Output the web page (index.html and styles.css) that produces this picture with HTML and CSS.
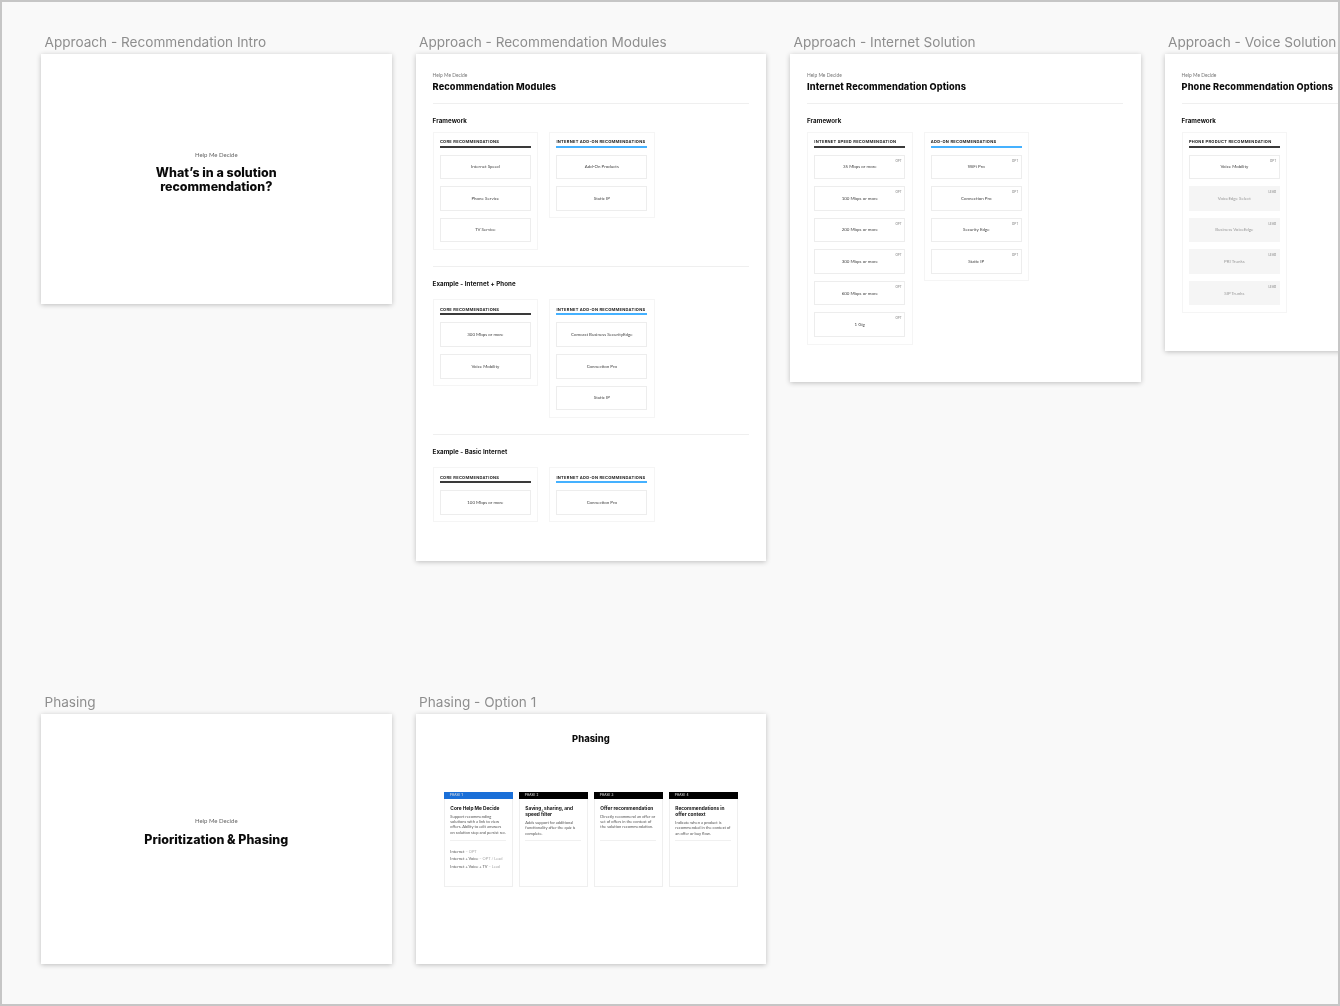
FILE: index.html
```html
<!DOCTYPE html>
<html lang="en">
<head>
<meta charset="utf-8">
<title>Help Me Decide</title>
<link rel="stylesheet" href="styles.css">
</head>
<body>
<main class="canvas">

<section class="frame-wrap at-intro">
  <h2 class="frame-label">Approach - Recommendation Intro</h2>
  <div class="frame frame-center intro-h">
    <p class="eyebrow-lg">Help Me Decide</p>
    <h1 class="hero">What’s in a solution<br>recommendation?</h1>
  </div>
</section>

<section class="frame-wrap at-modules">
  <h2 class="frame-label">Approach - Recommendation Modules</h2>
  <div class="frame frame-doc modules-h">
    <p class="eyebrow">Help Me Decide</p>
    <h1 class="doc-title">Recommendation Modules</h1>
    <hr class="rule">
    <h3 class="sub">Framework</h3>
    <div class="module-row">
      <div class="module">
        <h4 class="mod-head">CORE RECOMMENDATIONS</h4>
        <div class="item">Internet Speed</div>
        <div class="item">Phone Service</div>
        <div class="item">TV Service</div>
      </div>
      <div class="module">
        <h4 class="mod-head blue">INTERNET ADD-ON RECOMMENDATIONS</h4>
        <div class="item">Add-On Products</div>
        <div class="item">Static IP</div>
      </div>
    </div>
    <hr class="rule rule-mid">
    <h3 class="sub">Example - Internet + Phone</h3>
    <div class="module-row row-example">
      <div class="module">
        <h4 class="mod-head">CORE RECOMMENDATIONS</h4>
        <div class="item">300 Mbps or more</div>
        <div class="item">Voice Mobility</div>
      </div>
      <div class="module">
        <h4 class="mod-head blue">INTERNET ADD-ON RECOMMENDATIONS</h4>
        <div class="item">Comcast Business SecurityEdge</div>
        <div class="item">Connection Pro</div>
        <div class="item">Static IP</div>
      </div>
    </div>
    <hr class="rule rule-mid">
    <h3 class="sub">Example - Basic Internet</h3>
    <div class="module-row row-example">
      <div class="module">
        <h4 class="mod-head">CORE RECOMMENDATIONS</h4>
        <div class="item">100 Mbps or more</div>
      </div>
      <div class="module">
        <h4 class="mod-head blue">INTERNET ADD-ON RECOMMENDATIONS</h4>
        <div class="item">Connection Pro</div>
      </div>
    </div>
  </div>
</section>

<section class="frame-wrap at-internet">
  <h2 class="frame-label">Approach - Internet Solution</h2>
  <div class="frame frame-doc internet-h">
    <p class="eyebrow">Help Me Decide</p>
    <h1 class="doc-title">Internet Recommendation Options</h1>
    <hr class="rule">
    <h3 class="sub">Framework</h3>
    <div class="module-row">
      <div class="module">
        <h4 class="mod-head">INTERNET SPEED RECOMMENDATION</h4>
        <div class="item"><span class="tag">OPT</span>35 Mbps or more</div>
        <div class="item"><span class="tag">OPT</span>100 Mbps or more</div>
        <div class="item"><span class="tag">OPT</span>200 Mbps or more</div>
        <div class="item"><span class="tag">OPT</span>300 Mbps or more</div>
        <div class="item"><span class="tag">OPT</span>600 Mbps or more</div>
        <div class="item"><span class="tag">OPT</span>1 Gig</div>
      </div>
      <div class="module">
        <h4 class="mod-head blue">ADD-ON RECOMMENDATIONS</h4>
        <div class="item"><span class="tag">OPT</span>WiFi Pro</div>
        <div class="item"><span class="tag">OPT</span>Connection Pro</div>
        <div class="item"><span class="tag">OPT</span>Security Edge</div>
        <div class="item"><span class="tag">OPT</span>Static IP</div>
      </div>
    </div>
  </div>
</section>

<section class="frame-wrap at-voice">
  <h2 class="frame-label">Approach - Voice Solution</h2>
  <div class="frame frame-doc voice-h">
    <p class="eyebrow">Help Me Decide</p>
    <h1 class="doc-title">Phone Recommendation Options</h1>
    <hr class="rule">
    <h3 class="sub">Framework</h3>
    <div class="module-row">
      <div class="module">
        <h4 class="mod-head">PHONE PRODUCT RECOMMENDATION</h4>
        <div class="item"><span class="tag">OPT</span>Voice Mobility</div>
        <div class="item lead"><span class="tag">LEAD</span>VoiceEdge Select</div>
        <div class="item lead"><span class="tag">LEAD</span>Business VoiceEdge</div>
        <div class="item lead"><span class="tag">LEAD</span>PRI Trunks</div>
        <div class="item lead"><span class="tag">LEAD</span>SIP Trunks</div>
      </div>
    </div>
  </div>
</section>

<section class="frame-wrap at-phasing">
  <h2 class="frame-label">Phasing</h2>
  <div class="frame frame-center intro-h phasing-h">
    <p class="eyebrow-lg">Help Me Decide</p>
    <h1 class="hero">Prioritization &amp; Phasing</h1>
  </div>
</section>

<section class="frame-wrap at-option">
  <h2 class="frame-label">Phasing - Option 1</h2>
  <div class="frame phase-frame intro-h phasing-h">
    <h1 class="phase-title">Phasing</h1>
    <div class="phase-row">
      <article class="phase">
        <div class="phase-bar bar-blue">PHASE 1</div>
        <div class="phase-copy">
          <h5 class="phase-name">Core Help Me Decide</h5>
          <p class="phase-text">Support recommending<br>solutions with a link to view<br>offers. Ability to edit answers<br>on solution step and persist rec.</p>
        </div>
        <ul class="phase-list">
          <li>Internet <span class="dim">– OPT</span></li>
          <li>Internet + Voice <span class="dim">– OPT / Lead</span></li>
          <li>Internet + Voice + TV <span class="dim">– Lead</span></li>
        </ul>
      </article>
      <article class="phase">
        <div class="phase-bar">PHASE 2</div>
        <div class="phase-copy">
          <h5 class="phase-name">Saving, sharing, and<br>speed filter</h5>
          <p class="phase-text">Adds support for additional<br>functionality after the quiz is<br>complete.</p>
        </div>
      </article>
      <article class="phase">
        <div class="phase-bar">PHASE 3</div>
        <div class="phase-copy">
          <h5 class="phase-name">Offer recommendation</h5>
          <p class="phase-text">Directly recommend an offer or<br>set of offers in the context of<br>the solution recommendation.</p>
        </div>
      </article>
      <article class="phase">
        <div class="phase-bar">PHASE 4</div>
        <div class="phase-copy">
          <h5 class="phase-name">Recommendations in<br>offer context</h5>
          <p class="phase-text">Indicate when a product is<br>recommended in the context of<br>an offer or buy flow.</p>
        </div>
      </article>
    </div>
  </div>
</section>

</main>
</body>
</html>
```

FILE: styles.css
```css
* { box-sizing: border-box; margin: 0; padding: 0; }
html, body { width: 1340px; height: 1006px; overflow: hidden; background: #f9f9f9; }
body { font-family: "Lato", sans-serif; }

.canvas {
  position: relative;
  width: 1340px;
  height: 1006px;
  background: #f9f9f9;
  border: 2px solid #c6c6c6;
  overflow: hidden;
}

/* frames sit on a free canvas; offsets are relative to the 2px canvas border */
.frame-wrap { position: absolute; width: 351px; filter: blur(.3px); }
.at-intro { left: 39px; top: 30px; }
.at-modules { left: 413.6px; top: 30px; }
.at-internet { left: 788px; top: 30px; }
.at-voice { left: 1162.6px; top: 30px; }
.at-phasing { left: 39px; top: 690px; }
.at-option { left: 413.6px; top: 690px; }

.frame-label {
  height: 22px;
  padding-left: 3.5px;
  font: 400 13.6px/20px "Inter", sans-serif;
  color: #8e8e8e;
  white-space: nowrap;
}

.frame {
  width: 350.5px;
  background: #fff;
  box-shadow: 0 1px 5px rgba(0, 0, 0, .24);
}
.intro-h { height: 249.5px; }
.phasing-h { height: 250px; }
.modules-h { height: 507px; }
.internet-h { height: 328px; }
.voice-h { height: 297px; }

.frame-center {
  display: flex;
  flex-direction: column;
  align-items: center;
  padding-top: 97px;
  text-align: center;
}
.phasing-h.frame-center { padding-top: 103px; }
.eyebrow-lg { font-size: 6px; line-height: 8px; color: #666; margin-bottom: 6.5px; }
.phasing-h .eyebrow-lg { margin-bottom: 7.5px; }
.hero {
  font: 800 12.45px/14px "Inter", sans-serif;
  color: #0a0a0a;
}

.frame-doc { padding: 18px 17px 0 17px; }
.eyebrow { font-size: 4.9px; line-height: 7px; color: #777; }
.doc-title {
  margin-top: 1.5px;
  font: 800 9.2px/12px "Inter", sans-serif;
  letter-spacing: .1px;
  color: #0c0c0c;
  white-space: nowrap;
}
.rule { border: 0; border-top: 1px solid #efefef; margin-top: 10.5px; width: 316px; }
.rule-mid { margin-top: 16.5px; }
.sub {
  margin-top: 12px;
  font: 700 6.2px/9px "Inter", sans-serif;
  letter-spacing: .05px;
  color: #111;
}

.module-row { display: flex; align-items: flex-start; gap: 11px; margin-top: 6.5px; }
.row-example { margin-top: 11px; }
.module {
  width: 105.5px;
  padding: 5.5px 6.3px 6.6px;
  border: 1px solid #f5f5f5;
  display: flex;
  flex-direction: column;
  gap: 7px;
}
.mod-head {
  height: 9.5px;
  border-bottom: 2px solid #3a3a3a;
  font: 700 4px/7.5px "Inter", sans-serif;
  letter-spacing: .27px;
  color: #222;
  white-space: nowrap;
}
.mod-head.blue { border-bottom-color: #45b1ff; }

.item {
  position: relative;
  height: 24.6px;
  border: 1px solid #ededed;
  display: flex;
  align-items: center;
  justify-content: center;
  font-size: 4.45px;
  color: #444;
}
.item.lead { background: #f5f5f5; border-color: #f5f5f5; color: #9a9a9a; }
.tag {
  position: absolute;
  top: 3px;
  right: 2.6px;
  font: 500 3px/4px "Inter", sans-serif;
  color: #888;
}

.phase-frame { display: flex; flex-direction: column; align-items: center; padding-top: 19px; }
.phase-title {
  width: 100%;
  text-align: center;
  font: 800 9.4px/12px "Inter", sans-serif;
  color: #0c0c0c;
}
.phase-row { display: flex; gap: 6px; margin-top: 46.5px; }
.phase {
  width: 69px;
  height: 95px;
  border: 1px solid #efefef;
  background: #fff;
}
.phase-bar {
  height: 7px;
  margin: -1px -1px 0;
  padding-left: 6px;
  background: #000;
  color: #ddd;
  font: 600 3px/7px "Inter", sans-serif;
  letter-spacing: .12px;
}
.bar-blue { background: #1a6fd8; }
.phase-copy {
  height: 36px;
  margin: 6px 5.5px 0 5.5px;
  border-bottom: 1px solid #f0f0f0;
}
.phase-name {
  font: 700 4.8px/6.2px "Inter", sans-serif;
  color: #111;
  white-space: nowrap;
}
.phase-text {
  margin-top: 3px;
  font-size: 4px;
  line-height: 5.35px;
  color: #555;
  white-space: nowrap;
}
.phase-list {
  list-style: none;
  margin: 7.5px 0 0 5.5px;
  font-size: 4px;
  line-height: 7.35px;
  color: #555;
}
.dim { color: #aaa; }
```
